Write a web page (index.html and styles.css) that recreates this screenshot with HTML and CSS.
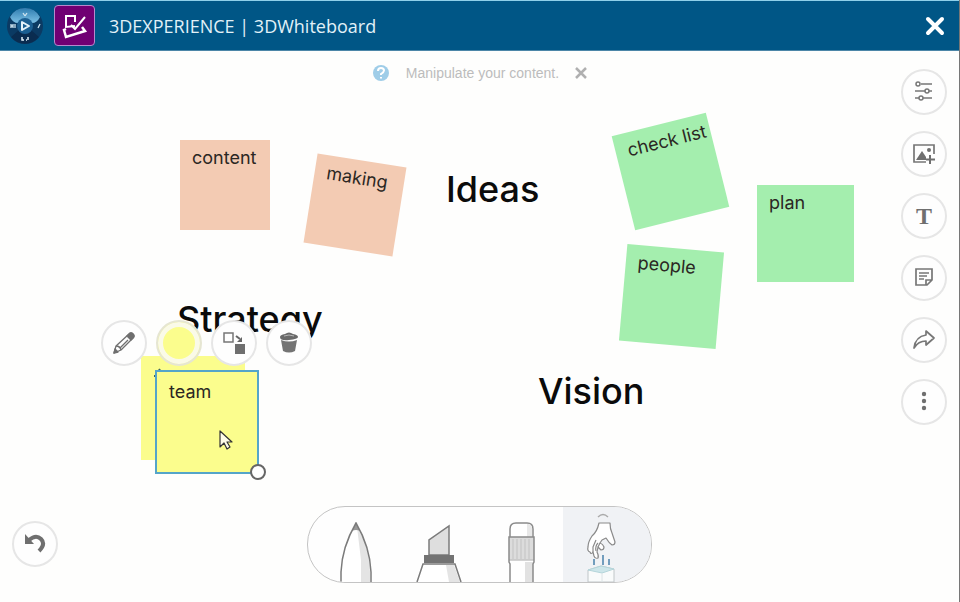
FILE: index.html
```html
<!DOCTYPE html>
<html lang="en">

<head>
    <meta charset="UTF-8">
    <meta name="viewport" content="width=device-width, initial-scale=1.0">
    <title>3DEXPERIENCE | 3DWhiteboard</title>
    <link rel="stylesheet" href="styles.css">
</head>

<body>
    <header class="topbar">
        <button type="button" class="compass" aria-label="Compass">
            <svg width="38" height="38" viewBox="0 0 38 38">
                <defs>
                    <linearGradient id="compassTop" x1="0" y1="0" x2="0" y2="1">
                        <stop offset="0" stop-color="#2f7db0" />
                        <stop offset="1" stop-color="#7cbfe4" />
                    </linearGradient>
                </defs>
                <circle cx="19" cy="19" r="18" fill="#0b3a63" />
                <path d="M4 10a17 17 0 0 1 30 0Q31 16 26 16a9 9 0 0 0-14 0Q7 16 4 10z" fill="url(#compassTop)" />
                <path d="M5 30L13 23a9 9 0 0 0 12 0L33 30A18 18 0 0 1 5 30z" fill="#0a2c50" />
                <circle cx="19" cy="19" r="8" fill="#1b5f92" />
                <path d="M16 15v8l7-4z" fill="none" stroke="#e4f2fa" stroke-width="2" stroke-linejoin="round" />
                <path d="M5 17v4M7 17v4M5 19h2M9 17v4M32 21l2-4M17 6l2 3M21 6l-2 3" fill="none" stroke="#cfe4f0" stroke-width="1.3" />
                <path d="M16 30v3h2M20 33h1M22 30v3" fill="none" stroke="#e4f2fa" stroke-width="1.5" />
            </svg>
        </button>
        <a href="#board" class="app-logo" aria-label="3DWhiteboard">
            <svg width="26" height="26" viewBox="0 0 26 26" fill="none" stroke="#fff" stroke-width="2">
                <path d="M13 9V3H4v11l9-1" />
                <path d="M23 4L13 16l-4-4" />
                <path d="M4 16l-2 1 2 7 19-6-3-4" stroke-width="2.5" />
            </svg>
        </a>
        <h1 class="title">3DEXPERIENCE | 3DWhiteboard</h1>
        <button type="button" class="close" aria-label="Close">
            <svg width="20" height="20" viewBox="0 0 20 20" stroke="#fff" stroke-width="4" stroke-linecap="round">
                <path d="M3 3l14 14M17 3L3 17" />
            </svg>
        </button>
    </header>

    <main class="board" id="board">
        <div class="canvas">
            <h2 class="label ideas">Ideas</h2>
            <h2 class="label strategy">Strategy</h2>
            <h2 class="label vision">Vision</h2>

            <div class="note peach content">content</div>
            <div class="note peach making">making</div>
            <div class="note green checklist">check list</div>
            <div class="note green plan">plan</div>
            <div class="note green people">people</div>
            <div class="note yellow behind">
                <svg width="8" height="10" viewBox="0 0 8 10" stroke="#3d6560" stroke-width="2">
                    <path d="M4 5l3-4M1 8h3" />
                </svg>
            </div>
            <div class="note yellow selected">team
                <span class="handle"></span>
            </div>

            <div class="note-tools">
                <button type="button" class="round" aria-label="Edit">
                    <svg width="24" height="24" viewBox="0 0 24 24" fill="none" stroke="#6f6f6f" stroke-width="1.3" stroke-linejoin="round">
                        <path d="M2 22l2-7L17 3q2-2 4 0t0 4L9 19z" />
                        <path d="M4 15q4 0 5 4M16 9l-8 8" />
                        <path d="M15 5l2-2q2-2 4 0t0 4l-2 2z" fill="#6f6f6f" />
                        <path d="M2 22l1-4 3 3z" fill="#6f6f6f" />
                    </svg>
                </button>
                <button type="button" class="round color" aria-label="Colour"></button>
                <button type="button" class="round" aria-label="Bring forward">
                    <svg width="24" height="24" viewBox="0 0 24 24">
                        <path d="M2 2h9v9H2z" fill="none" stroke="#777" stroke-width="1.5" />
                        <path d="M13 13h10v10H13z" fill="#6f6f6f" />
                        <path d="M14 5l4 3" stroke="#666" stroke-width="2" />
                        <path d="M20 6v5h-5z" fill="#666" />
                    </svg>
                </button>
                <button type="button" class="round" aria-label="Delete">
                    <svg width="22" height="24" viewBox="0 0 22 24">
                        <path d="M2 6q0-2 5-3 4-3 8 0 5 1 5 3t-9 3-9-3z" fill="#6a6a6a" />
                        <path d="M6 5q5-2 10 0" fill="none" stroke="#b5b5b5" />
                        <path d="M3 9q8 3 16 0l-2 11q-6 3-12 0z" fill="#747474" />
                    </svg>
                </button>
            </div>

            <svg class="pointer" width="14" height="20" viewBox="0 0 14 20">
                <path d="M1 1v16l4-4 3 6 3-2-3-5h5z" fill="#fffde8" stroke="#333" stroke-width="1.2" stroke-linejoin="round" />
            </svg>
        </div>

        <div class="hint">
            <svg width="18" height="18" viewBox="0 0 18 18">
                <circle cx="9" cy="9" r="8" fill="#9fcde8" />
                <path d="M6 7q0-3 3-3t3 2.5q0 1.5-3 3.5v1M9 13v1.5" fill="none" stroke="#fff" stroke-width="2" />
            </svg>
            <span>Manipulate your content.</span>
            <button type="button" class="hint-close" aria-label="Dismiss">
                <svg width="12" height="12" viewBox="0 0 12 12" stroke="#b0b0b0" stroke-width="2.5">
                    <path d="M1 1l10 10M11 1L1 11" />
                </svg>
            </button>
        </div>

        <nav class="side" aria-label="Board tools">
            <button type="button" class="round" aria-label="Settings">
                <svg width="20" height="22" viewBox="0 0 20 22" fill="none" stroke="#777" stroke-width="1.5">
                    <circle cx="4" cy="3" r="2" />
                    <circle cx="13" cy="10" r="2" />
                    <circle cx="7" cy="17" r="2" />
                    <path d="M7 3h11M1 10h10M15 10h3M1 17h4M9 17h9" />
                </svg>
            </button>
            <button type="button" class="round" aria-label="Add picture">
                <svg width="24" height="22" viewBox="0 0 24 22">
                    <path d="M14 19H2V2h20v9" fill="none" stroke="#777" stroke-width="1.7" />
                    <path d="M4 17l6-9 4 6v3z" fill="#6f6f6f" />
                    <circle cx="17" cy="7" r="2" fill="#6f6f6f" />
                    <path d="M18 12v9M14 16.5h9" stroke="#6f6f6f" stroke-width="2" />
                </svg>
            </button>
            <button type="button" class="round letter" aria-label="Add text">T</button>
            <button type="button" class="round" aria-label="Add note">
                <svg width="20" height="22" viewBox="0 0 20 22" fill="none" stroke="#777" stroke-width="1.7">
                    <path d="M2 2h16v11l-5 5H2zM12 18v-5h6" />
                    <path d="M5 6h10M5 9h8M5 12h5" stroke-width="1.3" />
                </svg>
            </button>
            <button type="button" class="round" aria-label="Share">
                <svg width="24" height="22" viewBox="0 0 24 22" fill="none" stroke="#777" stroke-width="1.7" stroke-linejoin="round">
                    <path d="M2 19C3 11 7 7 14 6V2l8 7-8 7v-4C9 12 5 14 2 19z" />
                </svg>
            </button>
            <button type="button" class="round" aria-label="More">
                <svg width="8" height="24" viewBox="0 0 8 24" fill="#6f6f6f">
                    <circle cx="4" cy="4" r="2.2" />
                    <circle cx="4" cy="11" r="2.2" />
                    <circle cx="4" cy="18" r="2.2" />
                </svg>
            </button>
        </nav>

        <button type="button" class="round undo" aria-label="Undo">
            <svg width="24" height="22" viewBox="0 0 24 22">
                <path d="M6 7q7-6 12-1t-2 12" fill="none" stroke="#6f6f6f" stroke-width="4" />
                <path d="M2 1v10h9z" fill="#6f6f6f" />
            </svg>
        </button>

        <div class="pens">
            <button type="button" class="pen" aria-label="Pen">
                <svg width="32" height="60" viewBox="0 0 32 60">
                    <path d="M1 60V50Q2 25 16 1q14 24 15 49v10z" fill="#fff" />
                    <path d="M21 60V38L17 5q13 22 13 45v10z" fill="#e4e4e4" />
                    <path d="M12 9l4-8 4 8q-4-2-8 0z" fill="#999" />
                    <path d="M1 60V50Q2 25 16 1q14 24 15 49v10" fill="none" stroke="#7b7b7b" stroke-width="1.5" />
                </svg>
            </button>
            <button type="button" class="pen" aria-label="Highlighter">
                <svg width="46" height="60" viewBox="0 0 46 60">
                    <path d="M13 33V18L33 4v29z" fill="#dedede" stroke="#7b7b7b" stroke-width="1.5" />
                    <path d="M8 33h30v8H8z" fill="#737373" />
                    <path d="M1 60l6-18h32l6 18z" fill="#fff" />
                    <path d="M30 43h8l6 17H33z" fill="#e4e4e4" />
                    <path d="M1 60l6-18h32l6 18" fill="none" stroke="#7b7b7b" stroke-width="1.5" />
                </svg>
            </button>
            <button type="button" class="pen" aria-label="Eraser">
                <svg width="30" height="60" viewBox="0 0 30 60" fill="none" stroke="#8a8a8a" stroke-width="1.5">
                    <path d="M3 16V7q0-6 6-6h11q6 0 6 6v9z" fill="#fff" />
                    <path d="M20 2h2q3 1 3 5v8h-5z" fill="#e8e8e8" stroke="none" />
                    <path d="M3 38v22h23V38z" fill="#fff" stroke="none" />
                    <path d="M18 40h8v20h-8z" fill="#e2e2e2" stroke="none" />
                    <path d="M2 15h25v23H2z" fill="#dcdcdc" stroke="none" />
                    <path d="M6 17v20M10 17v20M14 17v20M18 17v20M22 17v20" stroke="#cbcbcb" />
                    <path d="M2 38h25" stroke="#c4c4c4" />
                    <path d="M3 60V42l-1-2V15h25v25l-1 2v18" />
                </svg>
            </button>
            <button type="button" class="pen active" aria-label="Manipulate">
                <svg width="30" height="70" viewBox="0 0 30 70" fill="none" stroke="#8a8a8a" stroke-linejoin="round">
                    <path d="M12 5q5-5 10 0" stroke="#aaa" stroke-width="1.4" />
                    <path d="M13 11h11q0 6 2 10l3 9q0 3-3 3-3-2-6-7l-4 2-2 3q3 1 4 4 0 3-3 3l-3-3-1 5q2 4 1 6-3 1-4-2l-1-4q-2 3-3 0-3-1-2-5 0-5 4-11 5-4 7-13z" fill="#fff" stroke-width="1.2" />
                    <path d="M10 28l-3 7v5M12 31q-3 3-2 8M14 31l-2 4" stroke-width="1.2" />
                    <path d="M8 47v6M17 43v10M23 47v6" stroke="#2d6f9e" stroke-width="1.3" />
                    <path d="M2 58l13-4 13 3v13H2z" fill="#f9fbfb" stroke="#c0c6c8" />
                    <path d="M2 58l13-4 13 3-12 4z" fill="#cde6ea" stroke="#b4d5da" />
                    <path d="M16 61v9" stroke="#dce4e6" />
                </svg>
            </button>
        </div>
    </main>
</body>

</html>
```

FILE: styles.css
```css
* {
    box-sizing: border-box;
}

body {
    display: flex;
    flex-direction: column;
    min-height: 100vh;
    margin: 0;
    background-color: #fefefd;
    border-right: 1px solid #777;
    font-family: "Liberation Sans", Arial, sans-serif;
}

button {
    margin: 0;
    padding: 0;
    border: 0;
    background: none;
    cursor: pointer;
}

svg {
    display: block;
}

/* top bar */
.topbar {
    display: flex;
    align-items: center;
    padding: 4px 14px 4px 6px;
    background-color: #005686;
    border-top: 1px solid #8fd0ea;
    border-bottom: 1px solid #4c86a8;
}

.app-logo {
    display: flex;
    align-items: center;
    justify-content: center;
    width: 41px;
    height: 41px;
    margin-left: 10px;
    background-color: #700073;
    border: 1px solid #b689cc;
    border-radius: 4px;
}

.title {
    flex: 1;
    margin: 0 0 0 14px;
    color: #e2f1f8;
    font: 400 18px/24px "Open Sans", "Noto Sans", sans-serif;
}

/* board */
.board {
    display: grid;
    flex: 1;
    grid-template-columns: 1fr auto 1fr;
    grid-template-rows: auto 1fr auto;
    overflow: hidden;
}

.canvas {
    position: relative;
    grid-area: 1 / 1 / 4 / 4;
}

.hint {
    display: flex;
    grid-area: 1 / 2;
    align-items: center;
    justify-self: center;
    gap: 16px;
    z-index: 1;
    height: 20px;
    margin-top: 12px;
    color: #bcbcbc;
    font-size: 14px;
}

.side {
    display: flex;
    grid-area: 1 / 3 / 4 / 4;
    flex-direction: column;
    align-self: start;
    justify-self: end;
    gap: 16px;
    z-index: 1;
    padding: 18px 12px 0 0;
}

.round {
    display: flex;
    align-items: center;
    justify-content: center;
    width: 46px;
    height: 46px;
    background-color: #fefefe;
    border: 2px solid #e6e6e6;
    border-radius: 50%;
}

.letter {
    color: #6f6f6f;
    font: 700 24px/24px "Liberation Serif", serif;
}

.undo {
    grid-area: 3 / 1;
    align-self: end;
    z-index: 1;
    margin: 0 0 35px 12px;
}

.pens {
    display: flex;
    grid-area: 3 / 2;
    z-index: 1;
    margin-bottom: 19px;
    padding-left: 6px;
    overflow: hidden;
    background-color: #fefefe;
    border: 1px solid #c4c4c4;
    border-radius: 38px;
}

.pen {
    display: flex;
    align-items: flex-end;
    justify-content: center;
    width: 83px;
    height: 75px;
}

.pen.active {
    width: 88px;
    padding-right: 12px;
    background-color: #f0f2f5;
}

/* things placed on the canvas */
.label,
.note {
    position: absolute;
    margin: 0;
    font-family: Inter, sans-serif;
}

.label {
    color: #0b0b0b;
    font-size: 36px;
    font-weight: 500;
    line-height: 40px;
}

.ideas {
    top: 118px;
    left: 446px;
}

.strategy {
    top: 248px;
    left: 177px;
}

.vision {
    top: 320px;
    left: 538px;
}

.note {
    width: 97px;
    height: 97px;
    padding: 6px 12px;
    color: #2b2723;
    font-size: 18px;
    line-height: 24px;
    white-space: nowrap;
}

.peach {
    width: 90px;
    height: 90px;
    background-color: #f3cbb3;
}

.green {
    background-color: #a4eeae;
}

.yellow {
    width: 104px;
    height: 104px;
    background-color: #fbfd8d;
}

.content {
    top: 89px;
    left: 180px;
}

.making {
    top: 109px;
    left: 310px;
    transform: rotate(9deg);
}

.checklist {
    top: 72px;
    left: 622px;
    transform: rotate(-14deg);
}

.plan {
    top: 134px;
    left: 757px;
}

.people {
    top: 197px;
    left: 623px;
    transform: rotate(5deg);
}

.behind {
    top: 305px;
    left: 141px;
    padding: 12px;
}

.selected {
    top: 319px;
    left: 155px;
    padding: 8px 12px;
    border: 2px solid #55a5c9;
}

.handle {
    position: absolute;
    right: -9px;
    bottom: -8px;
    width: 16px;
    height: 16px;
    background-color: #fff;
    border: 2px solid #666;
    border-radius: 50%;
}

.note-tools {
    position: absolute;
    top: 269px;
    left: 101px;
    display: flex;
    gap: 9px;
}

.color {
    background-color: #fbfd8d;
    border-color: #e6e6d2;
    box-shadow: inset 0 0 0 5px #fafae8;
}

.pointer {
    position: absolute;
    top: 379px;
    left: 219px;
}
```
